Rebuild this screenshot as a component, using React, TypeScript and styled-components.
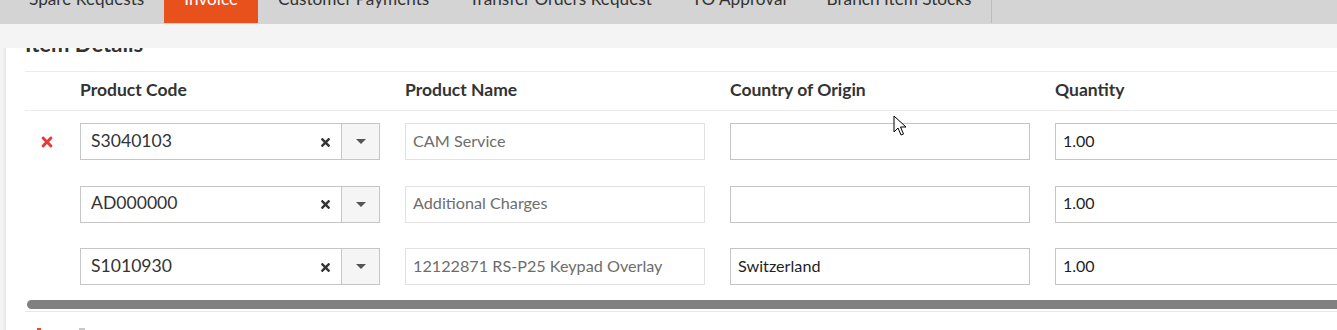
import React from "react";
import styled, { createGlobalStyle } from "styled-components";
import { FaTimes } from "react-icons/fa";

const GlobalStyle = createGlobalStyle`
  html, body { margin: 0; padding: 0; background: #f4f4f4; overflow: hidden; }
  body { font-family: Lato, "Open Sans", sans-serif; color: #333; }
  * { box-sizing: border-box; }
`;

const Page = styled.div`
  width: 1337px;
  height: 330px;
  display: flex;
  flex-direction: column;
  overflow: hidden;
  position: relative;
`;

const TabBar = styled.div`
  height: 24px;
  flex: none;
  background: #d4d4d4;
  display: flex;
  align-items: flex-end;
  padding-left: 9px;
  overflow: hidden;
`;

const Tab = styled.div<{ $active?: boolean; $last?: boolean }>`
  height: 50px;
  display: flex;
  align-items: center;
  padding: 0 20px;
  font-size: 17.2px;
  white-space: nowrap;
  color: ${(p) => (p.$active ? "#fff" : "#333")};
  background: ${(p) => (p.$active ? "#e9511c" : "transparent")};
  border-right: ${(p) => (p.$last ? "1px solid #bcbcbc" : "none")};
  margin-bottom: 1px;
`;

const Strip = styled.div`
  height: 24px;
  flex: none;
  background: #f4f4f4;
`;

const Viewport = styled.div`
  flex: 1;
  overflow: hidden;
  padding: 3px 0 0 6px;
`;

const Card = styled.div`
  width: 1420px;
  background: #fff;
  box-shadow: 0 0 4px rgba(0, 0, 0, 0.14);
  padding: 0 0 0 19px;
  min-height: 400px;
`;

const Heading = styled.h3`
  margin: -18px 0 16px 0;
  font-size: 22px;
  line-height: 22px;
  font-weight: 700;
  color: #333;
`;

const Grid = styled.div`
  display: grid;
  grid-template-columns: 55px repeat(4, 325px);
`;

const HeaderRow = styled.div`
  display: contents;
`;

const HeadCell = styled.div`
  height: 40px;
  border-top: 1px solid #ececec;
  border-bottom: 1px solid #ececec;
  display: flex;
  align-items: center;
  font-size: 17.5px;
  font-weight: 700;
  color: #333;
  padding-bottom: 3px;
`;

const Cell = styled.div`
  height: 62.5px;
  display: flex;
  align-items: center;
  padding-bottom: 1px;
`;

const DeleteCell = styled(Cell)`
  padding-left: 14px;
  color: #e53935;
  font-size: 16px;
`;

const Combo = styled.div`
  width: 300px;
  height: 37px;
  border: 1px solid #c6c6c6;
  display: flex;
  align-items: stretch;
  background: #fff;
`;

const ComboValue = styled.div`
  flex: 1;
  display: flex;
  align-items: center;
  padding: 0 0 3px 10px;
  font-size: 17.6px;
  color: #333;
`;

const ClearBtn = styled.div`
  width: 30px;
  display: flex;
  align-items: center;
  justify-content: center;
  color: #333;
  font-size: 13px;
  padding-right: 2px;
  padding-top: 1px;
`;

const DropBtn = styled.div`
  width: 38px;
  border-left: 1px solid #c6c6c6;
  background: #f5f5f5;
  display: flex;
  align-items: center;
  justify-content: center;
`;

const Caret = styled.span`
  width: 0;
  height: 0;
  border-left: 5px solid transparent;
  border-right: 5px solid transparent;
  border-top: 5px solid #555;
`;

const TextBox = styled.div<{ $readonly?: boolean }>`
  width: 300px;
  height: 37px;
  border: 1px solid ${(p) => (p.$readonly ? "#e2e2e2" : "#c4c4c4")};
  display: flex;
  align-items: center;
  padding: 0 0 3px 7px;
  font-size: 16.2px;
  color: ${(p) => (p.$readonly ? "#6d6d6d" : "#1f1f1f")};
  background: #fff;
  white-space: nowrap;
`;

const QtyBox = styled(TextBox)`
  width: 320px;
  font-size: 16px;
`;

const ScrollZone = styled.div`
  padding: 1.5px 0 1.5px 2px;
  border-bottom: 1px solid #e8e8e8;
`;

const Thumb = styled.div`
  height: 9px;
  border-radius: 5px 0 0 5px;
  background: #808080;
`;

const NextSection = styled.div`
  display: flex;
  align-items: flex-start;
  gap: 38px;
  padding: 16px 0 0 12px;
`;

const NextIcon = styled.span`
  width: 4px;
  height: 4px;
  background: #e9511c;
  display: block;
`;

const NextText = styled.span`
  width: 6px;
  height: 3px;
  background: #c8c8c8;
  display: block;
`;

const Cursor = styled.svg`
  position: absolute;
  left: 893px;
  top: 115px;
`;

const rows = [
  { code: "S3040103", name: "CAM Service", origin: "", qty: "1.00", del: true },
  { code: "AD000000", name: "Additional Charges", origin: "", qty: "1.00", del: false },
  { code: "S1010930", name: "12122871 RS-P25 Keypad Overlay", origin: "Switzerland", qty: "1.00", del: false },
];

const tabs = ["Spare Requests", "Invoice", "Customer Payments", "Transfer Orders Request", "TO Approval", "Branch Item Stocks"];

export default function App() {
  return (
    <Page>
      <GlobalStyle />
      <TabBar>
        {tabs.map((t, i) => (
          <Tab key={t} $active={t === "Invoice"} $last={i === tabs.length - 1}>
            {t}
          </Tab>
        ))}
      </TabBar>
      <Strip />
      <Viewport>
        <Card>
          <Heading>Item Details</Heading>
          <Grid>
            <HeaderRow>
              <HeadCell />
              <HeadCell>Product Code</HeadCell>
              <HeadCell>Product Name</HeadCell>
              <HeadCell>Country of Origin</HeadCell>
              <HeadCell>Quantity</HeadCell>
            </HeaderRow>
            {rows.map((r) => (
              <React.Fragment key={r.code}>
                <DeleteCell>{r.del && <FaTimes />}</DeleteCell>
                <Cell>
                  <Combo>
                    <ComboValue>{r.code}</ComboValue>
                    <ClearBtn>
                      <FaTimes />
                    </ClearBtn>
                    <DropBtn>
                      <Caret />
                    </DropBtn>
                  </Combo>
                </Cell>
                <Cell>
                  <TextBox $readonly>{r.name}</TextBox>
                </Cell>
                <Cell>
                  <TextBox>{r.origin}</TextBox>
                </Cell>
                <Cell>
                  <QtyBox>{r.qty}</QtyBox>
                </Cell>
              </React.Fragment>
            ))}
          </Grid>
          <ScrollZone>
            <Thumb />
          </ScrollZone>
          <NextSection>
            <NextIcon />
            <NextText />
          </NextSection>
        </Card>
      </Viewport>
      <Cursor width="14" height="22" viewBox="0 0 14 22">
        <path d="M1 1 L1 17 L5 13 L8 20 L10.5 19 L7.5 12 L13 12 Z" fill="#fff" stroke="#000" strokeWidth="1" strokeLinejoin="round" />
      </Cursor>
    </Page>
  );
}
